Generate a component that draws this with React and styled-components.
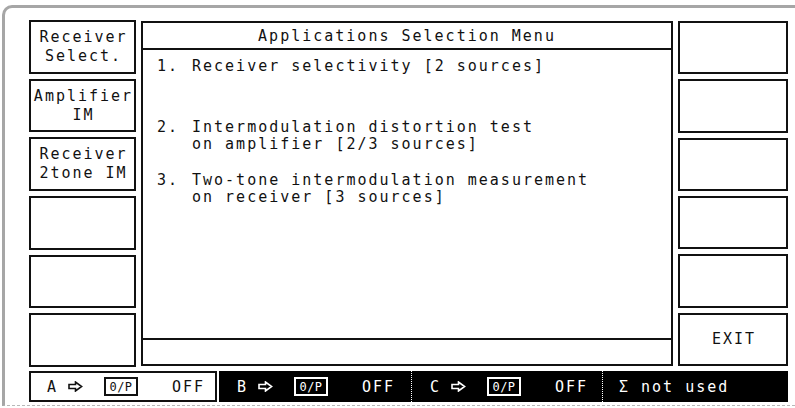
import React from 'react';
import styled, { createGlobalStyle } from 'styled-components';

const Global = createGlobalStyle`
  html, body { margin: 0; padding: 0; background: #fff; }
  body {
    font-family: "DejaVu Sans Mono", "Liberation Mono", monospace;
    color: #111;
  }
`;

const Frame = styled.div`
  box-sizing: border-box;
  margin: 5px 0 0 2px;
  width: 793px;
  height: 401px;
  border-top: 3px solid #a6a6a6;
  border-left: 3px solid #a6a6a6;
  border-bottom: 1px dashed #b8b8b8;
  border-top-left-radius: 10px;
  padding: 12px 0 0 24px;
`;

const Layout = styled.div`
  display: grid;
  grid-template-columns: 107px 532px 110px;
  grid-template-rows: 347px 31px;
  column-gap: 5px;
  row-gap: 4px;
`;

const SoftkeyColumn = styled.div`
  display: flex;
  flex-direction: column;
  gap: 5px;
  margin: ${p => (p.$right ? '1px 0' : '0')};
`;

const Softkey = styled.div`
  flex: 1;
  box-sizing: border-box;
  border: 2px solid #111;
  display: flex;
  flex-direction: column;
  align-items: center;
  justify-content: center;
  padding-left: 2px;
  font-size: 15px;
  letter-spacing: 2px;
  line-height: 19px;
  white-space: pre;
`;

const Panel = styled.div`
  box-sizing: border-box;
  border: 2px solid #111;
  display: flex;
  flex-direction: column;
  margin: 1px 0;
`;

const TitleBar = styled.div`
  height: 24px;
  border-bottom: 2px solid #111;
  display: flex;
  align-items: center;
  justify-content: center;
  font-size: 15px;
  letter-spacing: 2px;
  padding-top: 1px;
`;

const List = styled.div`
  flex: 1;
  padding: 8px 0 0 14px;
`;

const Item = styled.div`
  display: grid;
  grid-template-columns: 35px auto;
  margin-top: ${p => p.$gap}px;
  font-size: 15px;
  letter-spacing: 2px;
  line-height: 17px;
  white-space: pre;
`;

const StatusStrip = styled.div`
  height: 24px;
  border-top: 2px solid #111;
`;

const BottomBar = styled.div`
  grid-column: 1 / -1;
  display: flex;
  gap: 2px;
  height: 31px;
`;

const DarkGroup = styled.div`
  flex: 1;
  display: flex;
  background: #000;
`;

const Channel = styled.div`
  box-sizing: border-box;
  width: ${p => (p.$w ? `${p.$w}px` : 'auto')};
  flex: ${p => (p.$w ? 'none' : '1')};
  display: flex;
  align-items: center;
  padding-left: ${p => (p.$dark ? 18 : 16)}px;
  background: ${p => (p.$dark ? '#000' : '#fff')};
  color: ${p => (p.$dark ? '#fff' : '#111')};
  border: ${p => (p.$dark ? 'none' : '2px solid #111')};
  border-right: ${p => (p.$divider ? '1px dotted #fff' : p.$dark ? 'none' : '2px solid #111')};
  font-size: 15px;
  letter-spacing: 2px;
  white-space: pre;
`;

const Letter = styled.span`
  width: 21px;
`;

const ArrowSlot = styled.span`
  width: 36px;
  display: flex;
  align-items: center;
`;

const OutputBox = styled.span`
  box-sizing: border-box;
  width: 34px;
  height: 19px;
  border: 2px solid currentColor;
  display: flex;
  align-items: center;
  justify-content: center;
  font-size: 12px;
  letter-spacing: 0.5px;
  margin-right: 34px;
`;

const Arrow = () => (
  <svg width="15" height="11" viewBox="0 0 15 11">
    <path
      d="M1 3.5 H7.5 V1 L13.6 5.5 L7.5 10 V7.5 H1 Z"
      fill="none"
      stroke="currentColor"
      strokeWidth="1.6"
      strokeLinejoin="miter"
    />
  </svg>
);

const leftKeys = [
  ['Receiver', 'Select.'],
  ['Amplifier', 'IM'],
  ['Receiver', '2tone IM'],
  [],
  [],
  [],
];

const rightKeys = [[], [], [], [], [], ['EXIT']];

const items = [
  { n: '1.', lines: ['Receiver selectivity [2 sources]'], gap: 0 },
  { n: '2.', lines: ['Intermodulation distortion test', 'on amplifier [2/3 sources]'], gap: 44 },
  { n: '3.', lines: ['Two-tone intermodulation measurement', 'on receiver [3 sources]'], gap: 19 },
];

const ChannelContent = ({ letter }) => (
  <>
    <Letter>{letter}</Letter>
    <ArrowSlot><Arrow /></ArrowSlot>
    <OutputBox>0/P</OutputBox>
    <span>OFF</span>
  </>
);

export default function App() {
  return (
    <>
      <Global />
      <Frame>
        <Layout>
          <SoftkeyColumn>
            {leftKeys.map((k, i) => (
              <Softkey key={i}>
                {k.map((l, j) => <span key={j}>{l}</span>)}
              </Softkey>
            ))}
          </SoftkeyColumn>
          <Panel>
            <TitleBar>Applications Selection Menu</TitleBar>
            <List>
              {items.map(it => (
                <Item key={it.n} $gap={it.gap}>
                  <span>{it.n}</span>
                  <div>
                    {it.lines.map((l, j) => <div key={j}>{l}</div>)}
                  </div>
                </Item>
              ))}
            </List>
            <StatusStrip />
          </Panel>
          <SoftkeyColumn $right>
            {rightKeys.map((k, i) => (
              <Softkey key={i}>
                {k.map((l, j) => <span key={j}>{l}</span>)}
              </Softkey>
            ))}
          </SoftkeyColumn>
          <BottomBar>
            <Channel $w={188}>
              <ChannelContent letter="A" />
            </Channel>
            <DarkGroup>
              <Channel $dark $divider $w={193}>
                <ChannelContent letter="B" />
              </Channel>
              <Channel $dark $divider $w={191}>
                <ChannelContent letter="C" />
              </Channel>
              <Channel $dark style={{ paddingLeft: 16 }}>
                Σ not used
              </Channel>
            </DarkGroup>
          </BottomBar>
        </Layout>
      </Frame>
    </>
  );
}
